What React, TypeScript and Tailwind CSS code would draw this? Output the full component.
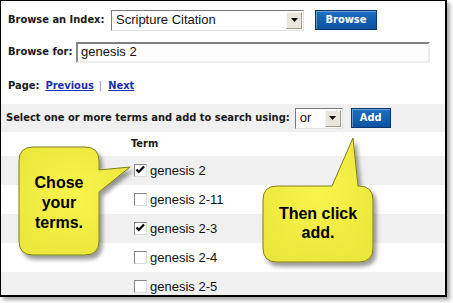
import React from "react";

const labelFont = { fontFamily: '"DejaVu Sans Condensed", "DejaVu Sans", Tahoma, sans-serif' };
const bodyFont = { fontFamily: '"Liberation Sans", Arial, sans-serif' };

function Arrow() {
  return (
    <div className="flex h-full w-[16px] items-center justify-center border border-t-[#f8f8f4] border-l-[#f8f8f4] border-b-[#9c9a8c] border-r-[#9c9a8c] bg-[#e9e7dc]">
      <svg width="7" height="4" viewBox="0 0 7 4">
        <path d="M0 0 H7 L3.5 4 Z" fill="#000" />
      </svg>
    </div>
  );
}

function BlueButton({ children, w }: { children: React.ReactNode; w: string }) {
  return (
    <div
      className={`flex h-[20px] ${w} items-center justify-center border border-[#0a3670] bg-gradient-to-b from-[#1c70c4] to-[#0a52a0] text-[11px] font-bold text-white shadow-[inset_1px_1px_0_rgba(255,255,255,0.35)]`}
      style={labelFont}
    >
      {children}
    </div>
  );
}

function CheckBox({ checked }: { checked: boolean }) {
  return (
    <div className="flex h-[13px] w-[13px] shrink-0 items-start justify-start border border-t-[#858585] border-l-[#858585] border-b-[#dcdcdc] border-r-[#dcdcdc] bg-white">
      {checked && (
        <svg width="11" height="11" viewBox="0 0 11 11">
          <path d="M1.5 4.5 L3.8 7 L9 1.5" stroke="#000" strokeWidth="2.2" fill="none" />
        </svg>
      )}
    </div>
  );
}

const terms = [
  { t: "genesis 2", c: true, g: true },
  { t: "genesis 2-11", c: false, g: false },
  { t: "genesis 2-3", c: true, g: true },
  { t: "genesis 2-4", c: false, g: false },
  { t: "genesis 2-5", c: false, g: true },
];

export default function App() {
  return (
    <div className="h-[303px] w-[453px] bg-white">
      <div className="relative h-[297px] w-[447px] overflow-hidden border-t border-l border-r-2 border-b-2 border-black bg-white text-[#1a1a1a] shadow-[3px_3px_4px_rgba(0,0,0,0.35)]">
        {/* Row 1 */}
        <div className="flex h-[38px] items-center pl-[7px]">
          <span className="w-[103px] text-[11px] font-bold" style={labelFont}>
            Browse an Index:
          </span>
          <div className="flex h-[21px] w-[193px] items-center border border-t-[#7a7a7a] border-l-[#7a7a7a] border-b-[#e2e2e2] border-r-[#e2e2e2] bg-white pr-[1px]">
            <span className="flex-1 pl-[4px] text-[13px] text-[#111]" style={bodyFont}>
              Scripture Citation
            </span>
            <div className="h-[17px]">
              <Arrow />
            </div>
          </div>
          <div className="ml-[11px]">
            <BlueButton w="w-[62px]">Browse</BlueButton>
          </div>
        </div>
        {/* Row 2 */}
        <div className="flex h-[26px] items-center pl-[7px]">
          <span className="w-[68px] text-[11px] font-bold" style={labelFont}>
            Browse for:
          </span>
          <div className="flex h-[21px] w-[354px] items-center border-2 border-t-[#7f7f7f] border-l-[#8a8a8a] border-b-[#ececec] border-r-[#ececec] bg-[#fdfdfd] pl-[3px] text-[13px] text-[#111]" style={bodyFont}>
            genesis 2
          </div>
        </div>
        {/* Row 3 */}
        <div className="flex h-[39px] items-center pl-[7px] pt-[4px] text-[11px] font-bold" style={labelFont}>
          <span>Page:</span>
          <span className="ml-[6px] text-[#1c2db5] underline">Previous</span>
          <span className="ml-[5px] font-normal text-[#888]">|</span>
          <span className="ml-[6px] text-[#1c2db5] underline">Next</span>
        </div>
        {/* Row 4 band */}
        <div className="flex h-[28px] items-center bg-[#f0f0f0] pl-[5px]">
          <span className="text-[11px] font-bold" style={labelFont}>
            Select one or more terms and add to search using:
          </span>
          <div className="ml-[5px] flex h-[21px] w-[48px] items-center border border-t-[#7a7a7a] border-l-[#7a7a7a] border-b-[#e2e2e2] border-r-[#e2e2e2] bg-white pr-[1px]">
            <span className="flex-1 pl-[4px] text-[13px] text-[#111]" style={bodyFont}>
              or
            </span>
            <div className="h-[17px]">
              <Arrow />
            </div>
          </div>
          <div className="ml-[8px]">
            <BlueButton w="w-[40px]">Add</BlueButton>
          </div>
        </div>
        {/* Term header */}
        <div className="flex h-[24px] items-center pl-[130px] text-[11px] font-bold" style={labelFont}>
          Term
        </div>
        {/* Rows */}
        {terms.map((r) => (
          <div
            key={r.t}
            className={`flex h-[29px] items-center gap-[3px] pl-[133px] ${r.g ? "bg-[#f0f0f0]" : "bg-white"}`}
          >
            <CheckBox checked={r.c} />
            <span className="text-[13px] text-[#111]" style={bodyFont}>
              {r.t}
            </span>
          </div>
        ))}

        {/* Callouts overlay */}
        <svg className="pointer-events-none absolute left-0 top-0" width="447" height="297" viewBox="0 0 447 297">
          <defs>
            <filter id="sh" x="-20%" y="-20%" width="150%" height="150%">
              <feDropShadow dx="3" dy="4" stdDeviation="2" floodColor="#000" floodOpacity="0.4" />
            </filter>
            <radialGradient id="yg" cx="50%" cy="45%" r="65%">
              <stop offset="0%" stopColor="#f8f44c" />
              <stop offset="100%" stopColor="#ebe63a" />
            </radialGradient>
          </defs>
          <path
            d="M32 146 H84 Q98 146 98 160 V169 L129 166 L98 191 V240 Q98 254 84 254 H32 Q18 254 18 240 V160 Q18 146 32 146 Z"
            fill="url(#yg)"
            stroke="#7d7d1e"
            strokeWidth="1"
            filter="url(#sh)"
          />
          <path
            d="M276 185 H331 L352 137 L357 185 H358 Q372 185 372 199 V247 Q372 261 358 261 H276 Q262 261 262 247 V199 Q262 185 276 185 Z"
            fill="url(#yg)"
            stroke="#7d7d1e"
            strokeWidth="1"
            filter="url(#sh)"
          />
        </svg>
        <div
          className="absolute left-[18px] top-[172px] w-[80px] text-center text-[16px] font-bold leading-[20px] text-black"
          style={bodyFont}
        >
          Chose
          <br />
          your
          <br />
          terms.
        </div>
        <div
          className="absolute left-[262px] top-[203px] w-[110px] text-center text-[16px] font-bold leading-[19px] text-black"
          style={bodyFont}
        >
          Then click
          <br />
          add.
        </div>
      </div>
    </div>
  );
}
